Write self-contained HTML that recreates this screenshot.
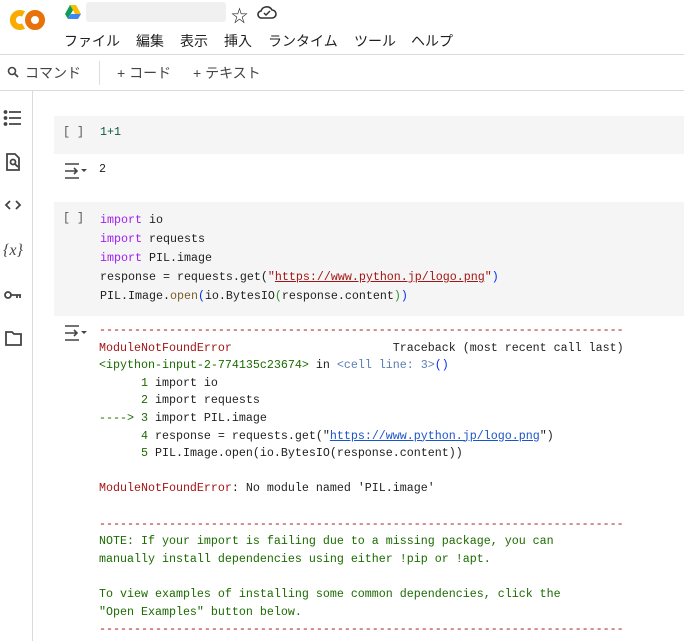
<!DOCTYPE html>
<html><head><meta charset="utf-8"><style>
*{margin:0;padding:0;box-sizing:border-box}
body{width:684px;height:641px;overflow:hidden;background:#fff;font-family:"Liberation Sans","Noto Sans CJK JP",sans-serif;color:#1f1f1f;position:relative}
.abs{position:absolute}
.menu span{position:absolute;top:31px;font-size:14px}
.mono{font-family:"Liberation Mono","Noto Sans CJK JP",monospace;font-size:11.67px;white-space:pre}
.kw{color:#a020f0}.str{color:#a31515}.fn{color:#795e26}
.red{color:#a31515}.grn{color:#2e7d32}.dg{color:#1b6b00}
.tb{font-size:14px;color:#444}
</style></head><body>
<!-- logo -->
<svg class="abs" style="left:6px;top:6px" width="42" height="28" viewBox="0 0 42 28">
<path d="M17.5 8 A7 7 0 1 0 17.5 20" fill="none" stroke="#f9ab00" stroke-width="6"/>
<circle cx="29" cy="14" r="7" fill="none" stroke="#e8710a" stroke-width="6"/>
</svg>
<svg class="abs" style="left:65px;top:5px" width="16" height="14" viewBox="0 0 16 14">
<path d="M5 0h6l5 9h-6z" fill="#fbbc04"/><path d="M5 0l-5 9 3 5 5-9z" fill="#0f9d58"/><path d="M3 14h10l3-5H6z" fill="#4285f4"/>
</svg>
<div class="abs" style="left:86px;top:2px;width:140px;height:20px;background:#f0f0f0;border-radius:3px"></div>
<div class="abs" style="left:231px;top:2px;font-size:17px">☆</div>
<svg class="abs" style="left:257px;top:4px" width="20" height="16" viewBox="0 0 20 16"><path d="M5 14h10a4 4 0 0 0 0-8 6 6 0 0 0-11 1 3.5 3.5 0 0 0 1 7z" fill="none" stroke="#333" stroke-width="1.6"/><path d="M7 9l2 2 4-4" fill="none" stroke="#333" stroke-width="1.5"/></svg>
<div class="menu"><span style="left:64px">ファイル</span><span style="left:136px">編集</span><span style="left:180px">表示</span><span style="left:224px">挿入</span><span style="left:268px">ランタイム</span><span style="left:354px">ツール</span><span style="left:411px">ヘルプ</span></div>
<div class="abs" style="left:0;top:54px;width:684px;height:1px;background:#dadada"></div>
<svg class="abs" style="left:7px;top:66px" width="12" height="12" viewBox="0 0 12 12"><circle cx="5" cy="5" r="3.5" fill="none" stroke="#444" stroke-width="1.6"/><path d="M7.5 7.5L11 11" stroke="#444" stroke-width="1.8"/></svg>
<div class="abs tb" style="left:25px;top:63px">コマンド</div>
<div class="abs" style="left:99px;top:61px;width:1px;height:24px;background:#ddd"></div>
<div class="abs tb" style="left:117px;top:63px">+ コード</div>
<div class="abs tb" style="left:193px;top:63px">+ テキスト</div>
<div class="abs" style="left:0;top:90px;width:684px;height:1px;background:#dadada"></div>
<div class="abs" style="left:32px;top:91px;width:1px;height:550px;background:#dadada"></div>
<svg class="abs" style="left:3px;top:110px" width="20" height="240" viewBox="0 0 20 240" fill="none" stroke="#444" stroke-width="1.8">
<circle cx="2.5" cy="2" r="1" fill="#444"/><circle cx="2.5" cy="8" r="1" fill="#444"/><circle cx="2.5" cy="14" r="1" fill="#444"/>
<path d="M6 2h12M6 8h12M6 14h12"/>
<path d="M4 44h8l4 4v12H4z"/><circle cx="10" cy="52" r="2.5"/><path d="M12 54l3 3"/>
<path d="M7 91l-4 4 4 4M13 91l4 4-4 4"/>
<text x="0" y="145" font-family="Liberation Serif" font-style="italic" font-size="16" fill="#444" stroke="none">{x}</text>
<circle cx="5" cy="185" r="3"/><path d="M8 185h10M14 185v3M17 185v3"/>
<path d="M3 222h6l2 2h7v11H3z"/>
</svg>
<div class="abs" style="left:54px;top:116px;width:630px;height:38px;background:#f5f5f5"></div>
<div class="abs mono" style="left:63px;top:125px;color:#555">[ ]</div>
<div class="abs mono" style="left:100px;top:125px;color:#0d5a3a">1+1</div>
<svg class="abs" style="left:64px;top:163px" width="24" height="16" viewBox="0 0 24 16" fill="none" stroke="#444" stroke-width="1.6"><path d="M1 1h14M1 15h14M1 8h12M10 5l3 3-3 3"/><path d="M17 6h6l-3 3z" fill="#444" stroke="none"/></svg>
<div class="abs mono" style="left:99px;top:162px">2</div>
<div class="abs" style="left:54px;top:202px;width:630px;height:114px;background:#f5f5f5"></div>
<div class="abs mono" style="left:63px;top:211px;color:#555">[ ]</div>
<div class="abs mono" style="left:100px;top:211px;line-height:19px"><span class="kw">import</span> io
<span class="kw">import</span> requests
<span class="kw">import</span> PIL.image
response = requests.get(<span class="str">"<u>https://www.python.jp/logo.png</u>"</span><span style="color:#0431fa">)</span>
PIL.Image.<span class="fn">open</span><span style="color:#0431fa">(</span>io.BytesIO<span style="color:#319331">(</span>response.content<span style="color:#319331">)</span><span style="color:#0431fa">)</span></div>
<svg class="abs" style="left:64px;top:325px" width="24" height="16" viewBox="0 0 24 16" fill="none" stroke="#444" stroke-width="1.6"><path d="M1 1h14M1 15h14M1 8h12M10 5l3 3-3 3"/><path d="M17 6h6l-3 3z" fill="#444" stroke="none"/></svg>
<div class="abs mono" style="left:99px;top:322px;line-height:17.6px"><span class="red">---------------------------------------------------------------------------</span>
<span class="red">ModuleNotFoundError</span>                       Traceback (most recent call last)
<span class="dg">&lt;ipython-input-2-774135c23674&gt;</span> in <span style="color:#5a7fb0">&lt;cell line: 3&gt;</span><span style="color:#0431fa">()</span>
<span class="dg">      1</span> import io
<span class="dg">      2</span> import requests
<span class="dg">----&gt; 3</span> import PIL.image
<span class="dg">      4</span> response = requests.get("<u style="color:#1a55c8">https://www.python.jp/logo.png</u>")
<span class="dg">      5</span> PIL.Image.open(io.BytesIO(response.content))

<span class="red">ModuleNotFoundError</span>: No module named 'PIL.image'

<span class="red">---------------------------------------------------------------------------</span>
<span class="dg">NOTE: If your import is failing due to a missing package, you can
manually install dependencies using either !pip or !apt.

To view examples of installing some common dependencies, click the
"Open Examples" button below.</span>
<span class="red">---------------------------------------------------------------------------</span></div>
</body></html>
